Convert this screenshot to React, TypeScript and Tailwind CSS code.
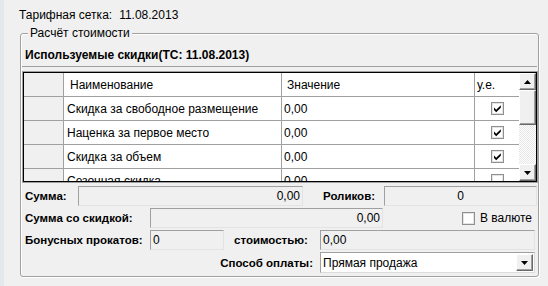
import React from 'react';

const rows = [
  { name: 'Скидка за свободное размещение', value: '0,00', checked: true },
  { name: 'Наценка за первое место', value: '0,00', checked: true },
  { name: 'Скидка за объем', value: '0,00', checked: true },
  { name: 'Сезонная скидка', value: '0,00', checked: false },
];

function CheckBox({ checked }: { checked: boolean }) {
  return (
    <svg width="13" height="13" viewBox="0 0 13 13" className="block shrink-0">
      <rect x="0.5" y="0.5" width="12" height="12" fill="#f7f7f7" stroke="#8e8f8f" />
      <rect x="1.5" y="1.5" width="10" height="10" fill="#ffffff" stroke="#e4e4e4" />
      {checked && <path d="M3 5.6 L5.2 7.7 L9.8 3.2 L9.8 5.8 L5.2 10.2 L3 8.1 Z" fill="#000" />}
    </svg>
  );
}

function Arrow({ up }: { up?: boolean }) {
  return (
    <svg width="7" height="4" viewBox="0 0 7 4" className="block">
      <path d={up ? 'M0 4 L3.5 0 L7 4 Z' : 'M0 0 L7 0 L3.5 4 Z'} fill="#000" />
    </svg>
  );
}

function ScrollButton({ up }: { up?: boolean }) {
  return (
    <div className="h-[17px] w-[17px] flex items-center justify-center bg-[#f0f0f0] border border-t-white border-l-white border-r-[#696969] border-b-[#696969] shadow-[inset_-1px_-1px_0_#a0a0a0]">
      <Arrow up={up} />
    </div>
  );
}

function Field({ w, align = 'left', children }: { w: string; align?: string; children?: React.ReactNode }) {
  return (
    <div
      className={`${w} h-[20px] flex items-center bg-[#f0f0f0] border border-t-[#a0a0a0] border-l-[#a0a0a0] border-r-[#e3e3e3] border-b-[#e3e3e3] px-[2px] ${
        align === 'right' ? 'justify-end' : align === 'center' ? 'justify-center' : 'justify-start'
      }`}
    >
      {children}
    </div>
  );
}

export default function App() {
  return (
    <div className="w-[548px] h-[286px] bg-[#f0f0f0] flex overflow-hidden text-black text-[12px] leading-[14px] font-['Liberation_Sans',Arial,sans-serif]">
      <div className="w-[4px] h-full bg-[#e3e8ed]" />
      <div className="flex-1 flex flex-col">
        <div className="h-[33px] pl-[15px] pt-[8px] flex items-start">
          <span>Тарифная сетка:</span>
          <span className="ml-[7px]">11.08.2013</span>
        </div>

        <div className="relative ml-[16px] w-[519px] h-[244px] border border-[#a0a0a0] rounded-[3px] shadow-[1px_1px_0_#fff,inset_1px_1px_0_#fff] flex flex-col">
          <span className="absolute top-[-8px] left-[7px] px-[2px] bg-[#f0f0f0]">Расчёт стоимости</span>

          <div className="h-[32px] pt-[14px] pl-[4px] font-bold">Используемые скидки(ТС: 11.08.2013)</div>
          <div className="h-px bg-[#a0a0a0] mx-px" />

          <div className="ml-[2px] mt-[5px] w-[514px] h-[110px] border border-black shadow-[0_0_0_1px_#a0a0a0] flex bg-white">
            <div className="w-[495px] h-[108px] overflow-hidden flex flex-col">
              <div className="h-[24px] shrink-0 flex border-b border-[#a0a0a0]">
                <div className="w-[40px] bg-[#f0f0f0] border-r border-[#a0a0a0]" />
                <div className="w-[218px] border-r border-[#a0a0a0] flex items-center pl-[6px]">Наименование</div>
                <div className="w-[193px] border-r border-[#a0a0a0] flex items-center pl-[5px]">Значение</div>
                <div className="w-[44px] flex items-center pl-[2px]">у.е.</div>
              </div>
              {rows.map((r) => (
                <div key={r.name} className="h-[24px] shrink-0 flex border-b border-[#a0a0a0]">
                  <div className="w-[40px] bg-[#f0f0f0] border-r border-[#a0a0a0]" />
                  <div className="w-[218px] border-r border-[#a0a0a0] flex items-center pl-[3px]">{r.name}</div>
                  <div className="w-[193px] border-r border-[#a0a0a0] flex items-center pl-[2px]">{r.value}</div>
                  <div className="w-[44px] flex items-center justify-center">
                    <CheckBox checked={r.checked} />
                  </div>
                </div>
              ))}
            </div>
            <div className="w-[17px] h-[108px] flex flex-col bg-[repeating-conic-gradient(#ffffff_0_25%,#e6e6e6_0_50%)] bg-[length:2px_2px]">
              <ScrollButton up />
              <div className="h-[35px] bg-[#f0f0f0] border border-t-white border-l-white border-r-[#696969] border-b-[#696969] shadow-[inset_-1px_-1px_0_#a0a0a0]" />
              <div className="flex-1" />
              <ScrollButton />
            </div>
          </div>

          <div className="mt-[4px] flex items-center h-[20px]">
            <div className="w-[57px] pl-[4px] font-bold text-[11.5px]">Сумма:</div>
            <Field w="w-[225px]" align="right">0,00</Field>
            <div className="ml-[20px] w-[61px] font-bold text-[11.5px]">Роликов:</div>
            <Field w="w-[153px]" align="center">0</Field>
          </div>

          <div className="mt-[2px] flex items-center h-[20px]">
            <div className="w-[129px] pl-[4px] font-bold text-[11.5px]">Сумма со скидкой:</div>
            <Field w="w-[233px]" align="right">0,00</Field>
            <div className="ml-[79px] flex items-center gap-[5px]">
              <CheckBox checked={false} />
              <span>В валюте</span>
            </div>
          </div>

          <div className="mt-[2px] flex items-center h-[20px]">
            <div className="w-[129px] pl-[4px] font-bold text-[11.5px]">Бонусных прокатов:</div>
            <Field w="w-[74px]">0</Field>
            <div className="ml-[10px] w-[86px] font-bold text-[11.5px]">стоимостью:</div>
            <Field w="w-[215px]">0,00</Field>
          </div>

          <div className="mt-[2px] flex items-center h-[21px]">
            <div className="w-[299px] pr-[7px] text-right font-bold text-[11.5px]">Способ оплаты:</div>
            <div className="w-[215px] h-[21px] bg-white border border-t-[#a0a0a0] border-l-[#a0a0a0] border-r-[#dcdcdc] border-b-[#dcdcdc] flex items-center">
              <span className="flex-1 pl-[2px]">Прямая продажа</span>
              <div className="w-[17px] h-[17px] mr-[1px] flex items-center justify-center bg-[#f0f0f0] border border-t-white border-l-white border-r-[#696969] border-b-[#696969] shadow-[inset_-1px_-1px_0_#a0a0a0]">
                <Arrow />
              </div>
            </div>
          </div>
        </div>
      </div>
    </div>
  );
}
